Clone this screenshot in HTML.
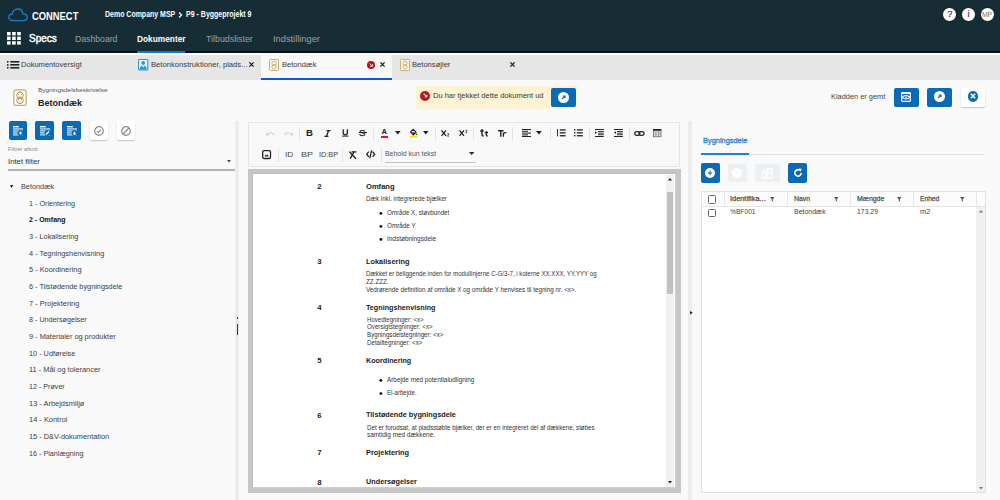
<!DOCTYPE html>
<html><head><meta charset="utf-8">
<style>
*{box-sizing:border-box;margin:0;padding:0}
html,body{width:1000px;height:500px;overflow:hidden;background:#f9f9f9;font-family:"Liberation Sans",sans-serif;color:#333}
.a{position:absolute}
.t{position:absolute;white-space:nowrap;line-height:1;transform-origin:0 0}
.bb{position:absolute;background:#0b6ab5;border-radius:2px}
.bw{position:absolute;background:#fff;border-radius:2px;box-shadow:0 1px 1.5px rgba(0,0,0,.22)}
svg{position:absolute;overflow:visible}

</style></head><body>
<!-- HEADER -->
<div class="a" style="left:0;top:0;width:1000px;height:51px;background:#162d35"></div>
<div class="a" style="left:0;top:51px;width:1000px;height:2px;background:#061018"></div>
<div class="a" style="left:0;top:53px;width:1000px;height:2px;background:#fff"></div>
<svg style="left:8px;top:8px" width="20" height="14" viewBox="0 0 20 14">
  <path d="M5 12.6 C2.3 12.6 0.8 10.9 0.8 9.2 C0.8 7.3 2.3 5.9 4.3 6 C4.6 3.3 6.7 1 9.7 1 C12.6 1 14.6 3.2 15 5.8 C17.4 5.7 19.2 7.3 19.2 9.3 C19.2 11.2 17.7 12.6 15.6 12.6 Z" fill="none" stroke="#1a80d2" stroke-width="1.3"/>
</svg>
<svg style="left:177.5px;top:12px" width="5" height="6" viewBox="0 0 5 6"><path d="M1 0.5 L3.6 3 L1 5.5" fill="none" stroke="#fff" stroke-width="1.2"/></svg>
<div class="a" style="left:942px;top:6.8px;width:15px;height:15px;border-radius:50%;background:#fff;border:1.3px solid #061015"></div>
<div class="a" style="left:961px;top:6.8px;width:15px;height:15px;border-radius:50%;background:#fff;border:1.3px solid #061015"></div>
<div class="a" style="left:980px;top:6.8px;width:15px;height:15px;border-radius:50%;background:#fff;border:1.3px solid #061015"></div>
<div class="t" style="left:947.2px;top:9.6px;font-size:9px;color:#333;-webkit-text-stroke:0.2px #333">?</div>
<div class="t" style="left:967.4px;top:9.6px;font-size:9px;color:#444;-webkit-text-stroke:0.25px #444">i</div>
<div class="t" style="left:982px;top:11px;font-size:7px;color:#777;letter-spacing:-0.4px">MP</div>
<svg style="left:7px;top:32px" width="14" height="13" viewBox="0 0 14 13"><g fill="#fff">
  <rect x="0" y="0" width="3.6" height="3.4"/><rect x="5.1" y="0" width="3.6" height="3.4"/><rect x="10.2" y="0" width="3.6" height="3.4"/>
  <rect x="0" y="4.6" width="3.6" height="3.4"/><rect x="5.1" y="4.6" width="3.6" height="3.4"/><rect x="10.2" y="4.6" width="3.6" height="3.4"/>
  <rect x="0" y="9.2" width="3.6" height="3.4"/><rect x="5.1" y="9.2" width="3.6" height="3.4"/><rect x="10.2" y="9.2" width="3.6" height="3.4"/></g></svg>
<div class="a" style="left:136.5px;top:51px;width:48px;height:2px;background:#0a7ad6"></div>

<!-- TAB BAR -->
<div class="a" style="left:0;top:55px;width:1000px;height:25px;background:#e6e6e6"></div>
<div class="a" style="left:261px;top:55px;width:130.5px;height:25px;background:#f8f8f8"></div>
<div class="a" style="left:261px;top:77.5px;width:130.5px;height:2px;background:#0a5ec0"></div>
<svg style="left:6.5px;top:61px" width="13" height="8" viewBox="0 0 13 8"><g fill="#222">
  <rect x="0" y="0" width="1.5" height="1.6"/><rect x="3.3" y="0" width="9" height="1.6"/>
  <rect x="0" y="3" width="1.5" height="1.6"/><rect x="3.3" y="3" width="9" height="1.6"/>
  <rect x="0" y="6" width="1.5" height="1.6"/><rect x="3.3" y="6" width="9" height="1.6"/></g></svg>
<svg style="left:137.8px;top:58.7px" width="10.4" height="11.4" viewBox="0 0 10.4 11.4">
  <rect x="0.55" y="0.55" width="9.3" height="10.3" rx="0.8" fill="#e9f4fb" stroke="#2b95d8" stroke-width="1.1"/>
  <circle cx="5.2" cy="3.9" r="1.9" fill="#2b95d8"/>
  <path d="M1.6 10.3 C1.9 7.6 3.4 6.6 5.2 6.6 C7 6.6 8.5 7.6 8.8 10.3 Z" fill="#2b95d8"/>
  <path d="M3.6 6.8 L5.2 8.6 L6.8 6.8" fill="#e9f4fb"/>
</svg>
<svg style="left:249px;top:62px" width="5" height="5" viewBox="0 0 5 5"><path d="M0.4 0.4 L4.6 4.6 M4.6 0.4 L0.4 4.6" stroke="#1a1a1a" stroke-width="1.25"/></svg>
<svg style="left:269px;top:58.5px" width="10" height="12" viewBox="0 0 10 12">
  <rect x="0.5" y="0.5" width="9" height="11" rx="0.8" fill="#fbf8f0" stroke="#c2a56b" stroke-width="0.9"/>
  <circle cx="5" cy="4.2" r="2.2" fill="none" stroke="#c2a56b" stroke-width="0.8"/>
  <circle cx="5" cy="7.8" r="2.2" fill="none" stroke="#c2a56b" stroke-width="0.8"/>
  <g fill="#c2a56b"><circle cx="4" cy="3.6" r="0.45"/><circle cx="6" cy="3.6" r="0.45"/><circle cx="4" cy="7.2" r="0.45"/><circle cx="6" cy="7.2" r="0.45"/></g>
</svg>
<div class="a" style="left:367px;top:60.9px;width:8.2px;height:8.2px;border-radius:50%;background:#c0121b"></div>
<svg style="left:369.2px;top:63px" width="4" height="4" viewBox="0 0 4 4"><path d="M0.5 0.5 L3.2 3.2 M3.3 1.2 L3.3 3.3 L1.2 3.3" fill="none" stroke="#fff" stroke-width="0.9"/></svg>
<svg style="left:379.5px;top:62px" width="5" height="5" viewBox="0 0 5 5"><path d="M0.4 0.4 L4.6 4.6 M4.6 0.4 L0.4 4.6" stroke="#1a1a1a" stroke-width="1.25"/></svg>
<svg style="left:399.5px;top:58.5px" width="10" height="12" viewBox="0 0 10 12">
  <rect x="0.5" y="0.5" width="9" height="11" rx="0.8" fill="#fbf8f0" stroke="#c2a56b" stroke-width="0.9"/>
  <circle cx="5" cy="4.2" r="2.2" fill="none" stroke="#c2a56b" stroke-width="0.8"/>
  <circle cx="5" cy="7.8" r="2.2" fill="none" stroke="#c2a56b" stroke-width="0.8"/>
  <g fill="#c2a56b"><circle cx="4" cy="3.6" r="0.45"/><circle cx="6" cy="3.6" r="0.45"/><circle cx="4" cy="7.2" r="0.45"/><circle cx="6" cy="7.2" r="0.45"/></g>
</svg>
<svg style="left:510.2px;top:62px" width="5" height="5" viewBox="0 0 5 5"><path d="M0.4 0.4 L4.6 4.6 M4.6 0.4 L0.4 4.6" stroke="#1a1a1a" stroke-width="1.25"/></svg>

<!-- DOC HEADER -->
<svg style="left:12.5px;top:88.5px" width="14" height="17" viewBox="0 0 14 17">
  <rect x="0.9" y="0.9" width="12.2" height="15.4" rx="1" fill="#fff" stroke="#b8974f" stroke-width="1"/>
  <path d="M7 1.5 V3" stroke="#b8974f" stroke-width="0.8"/>
  <circle cx="7" cy="6.3" r="3.3" fill="none" stroke="#b8974f" stroke-width="1"/>
  <circle cx="7" cy="11.4" r="3.3" fill="none" stroke="#b8974f" stroke-width="1"/>
  <g fill="#b8974f"><circle cx="5.4" cy="5.3" r="0.65"/><circle cx="8.6" cy="5.3" r="0.65"/><circle cx="5.4" cy="10.4" r="0.65"/><circle cx="8.6" cy="10.4" r="0.65"/></g>
  <path d="M7 6.6 V8.2 M7 11.7 V13.3" stroke="#b8974f" stroke-width="0.8"/>
</svg>
<div class="a" style="left:416px;top:86px;width:162px;height:22.5px;background:#fdf2d4"></div>
<div class="a" style="left:420.2px;top:91.3px;width:10px;height:10px;border-radius:50%;background:#bf1420"></div>
<svg style="left:422.8px;top:93.4px" width="5" height="5" viewBox="0 0 5 5"><path d="M0.6 0.6 L3.2 3.2" stroke="#fff" stroke-width="1.2"/><path d="M4.3 1.4 L4.3 4.3 L1.4 4.3Z" fill="#fff"/></svg>
<div class="bb" style="left:550.5px;top:88px;width:25px;height:18.6px"></div>
<div class="a" style="left:557.6px;top:91.8px;width:11px;height:11px;border-radius:50%;background:#fff"></div>
<svg style="left:560.6px;top:94.8px" width="5" height="5" viewBox="0 0 5 5"><path d="M0.8 4.2 L4 1 M1.8 1 L4 1 L4 3.2" fill="none" stroke="#0b6ab5" stroke-width="1.1"/></svg>

<div class="bb" style="left:893.6px;top:88px;width:25px;height:18.8px"></div>
<svg style="left:901.3px;top:91.9px" width="10" height="10" viewBox="0 0 10 10">
  <rect x="0.6" y="0.7" width="8.8" height="8.6" rx="1" fill="none" stroke="#fff" stroke-width="1.2"/>
  <rect x="0.6" y="0.4" width="8.8" height="1.6" fill="#fff"/>
  <path d="M1.2 5.2 C3 2.9 7 2.9 8.8 5.2 C7 7.5 3 7.5 1.2 5.2 Z" fill="none" stroke="#fff" stroke-width="1.1"/>
  <circle cx="5" cy="5.2" r="0.9" fill="#cfe6f7"/>
</svg>
<div class="bb" style="left:927px;top:88px;width:25px;height:18.8px"></div>
<div class="a" style="left:934px;top:91px;width:11px;height:11px;border-radius:50%;background:#fff"></div>
<svg style="left:937px;top:94px" width="5" height="5" viewBox="0 0 5 5"><path d="M0.8 4.2 L4 1 M1.8 1 L4 1 L4 3.2" fill="none" stroke="#0b6ab5" stroke-width="1.1"/></svg>
<div class="bw" style="left:960.5px;top:88px;width:24.5px;height:18.8px"></div>
<div class="a" style="left:967.5px;top:91px;width:10.6px;height:10.6px;border-radius:50%;background:#0b6ab5"></div>
<svg style="left:969.9px;top:93.4px" width="6" height="6" viewBox="0 0 6 6"><path d="M0.8 0.8 L5.2 5.2 M5.2 0.8 L0.8 5.2" stroke="#fff" stroke-width="1.5"/></svg>

<!-- LEFT BUTTONS -->
<div class="bb" style="left:8.5px;top:121.2px;width:18.5px;height:18.8px"></div>
<div class="bb" style="left:35.3px;top:121.2px;width:18.5px;height:18.8px"></div>
<div class="bb" style="left:62px;top:121.2px;width:18.5px;height:18.8px"></div>
<svg style="left:13px;top:125.5px" width="11" height="10" viewBox="0 0 11 10">
  <rect x="0" y="0" width="5.8" height="1.4" fill="#fff"/>
  <g fill="#9fcdee"><rect x="0" y="2.1" width="10" height="1.6"/><rect x="0" y="4.1" width="10" height="1.6"/><rect x="0" y="6.1" width="10" height="1.6"/><rect x="0" y="8.1" width="10" height="1.5"/></g>
  <circle cx="7.5" cy="7" r="2.9" fill="#0b6ab5"/>
  <path d="M7.5 5.4 V8.6 M5.9 7 H9.1" stroke="#fff" stroke-width="1.2"/>
</svg>
<svg style="left:39.8px;top:125.5px" width="11" height="10" viewBox="0 0 11 10">
  <rect x="0" y="0" width="5.8" height="1.4" fill="#fff"/>
  <g fill="#9fcdee"><rect x="0" y="2.1" width="10" height="1.6"/><rect x="0" y="4.1" width="10" height="1.6"/><rect x="0" y="6.1" width="10" height="1.6"/><rect x="0" y="8.1" width="10" height="1.5"/></g>
  <circle cx="7.5" cy="7" r="2.9" fill="#0b6ab5"/>
  <path d="M6 8.5 L9 5.5" stroke="#fff" stroke-width="1.2"/>
</svg>
<svg style="left:66.5px;top:125.5px" width="11" height="10" viewBox="0 0 11 10">
  <rect x="0" y="0" width="5.8" height="1.4" fill="#fff"/>
  <g fill="#9fcdee"><rect x="0" y="2.1" width="10" height="1.6"/><rect x="0" y="4.1" width="10" height="1.6"/><rect x="0" y="6.1" width="10" height="1.6"/><rect x="0" y="8.1" width="10" height="1.5"/></g>
  <circle cx="7.5" cy="7" r="2.9" fill="#0b6ab5"/>
  <path d="M7.5 5.2 C8.3 6.4 8.7 7 8.7 7.7 A1.2 1.2 0 0 1 6.3 7.7 C6.3 7 6.7 6.4 7.5 5.2Z" fill="#fff"/>
</svg>
<div class="bw" style="left:89.8px;top:121.2px;width:18.6px;height:18.8px"></div>
<div class="bw" style="left:116.9px;top:121.2px;width:18.6px;height:18.8px"></div>
<svg style="left:94px;top:125.5px" width="10" height="10" viewBox="0 0 10 10"><circle cx="5" cy="5" r="4.3" fill="none" stroke="#8a8a8a" stroke-width="1.2"/><path d="M2.9 5.1 L4.4 6.5 L7.2 3.7" fill="none" stroke="#8a8a8a" stroke-width="1.2"/></svg>
<svg style="left:121.2px;top:125.5px" width="10" height="10" viewBox="0 0 10 10"><circle cx="5" cy="5" r="4.3" fill="none" stroke="#8a8a8a" stroke-width="1.2"/><path d="M2 8 L8 2" stroke="#8a8a8a" stroke-width="1.2"/></svg>

<!-- filter -->
<svg style="left:226.9px;top:160px" width="4" height="2.5" viewBox="0 0 4 2.5"><path d="M0 0 H4 L2 2.5Z" fill="#444"/></svg>
<div class="a" style="left:8px;top:169px;width:227px;height:1.8px;background:#b4b4b4"></div>
<svg style="left:10.4px;top:185.3px" width="3.2" height="3" viewBox="0 0 3.2 3"><path d="M0 0 H3.2 L1.6 3Z" fill="#222"/></svg>

<!-- LEFT SPLITTER -->
<div class="a" style="left:235px;top:121px;width:4px;height:379px;background:#ececec"></div>
<div class="a" style="left:236.5px;top:317px;width:1.5px;height:1.5px;background:#333"></div>
<div class="a" style="left:236.5px;top:324px;width:1.2px;height:10.5px;background:#333"></div>

<!-- EDITOR -->
<div class="a" style="left:247.5px;top:121.5px;width:432px;height:45px;background:#f8f8f8;border:1px solid #e6e6e6"></div>
<div class="a" style="left:247.5px;top:168.8px;width:433px;height:324px;background:#c6c6c6"></div>
<div class="a" style="left:252.3px;top:173.3px;width:423.5px;height:314.7px;background:#fff;border:1px solid #bdbdbd;border-right-color:#cfcfcf;border-bottom-color:#cfcfcf"></div>
<div class="a" style="left:666.4px;top:175px;width:7.5px;height:312px;background:#f0f0f0"></div>
<div class="a" style="left:666.9px;top:192px;width:6.4px;height:101.6px;background:#c1c1c1"></div>
<svg style="left:668.3px;top:177.8px" width="4" height="2.6" viewBox="0 0 4 2.6"><path d="M0 2.6 H4 L2 0Z" fill="#222"/></svg>
<svg style="left:668.3px;top:481.2px" width="4" height="2.6" viewBox="0 0 4 2.6"><path d="M0 0 H4 L2 2.6Z" fill="#222"/></svg>
<svg style="left:0;top:0" width="1" height="1"><circle cx="380.90" cy="213.40" r="1.45" fill="#111"/></svg>
<svg style="left:0;top:0" width="1" height="1"><circle cx="380.90" cy="226.40" r="1.45" fill="#111"/></svg>
<svg style="left:0;top:0" width="1" height="1"><circle cx="380.90" cy="239.40" r="1.45" fill="#111"/></svg>
<svg style="left:0;top:0" width="1" height="1"><circle cx="380.90" cy="380.40" r="1.45" fill="#111"/></svg>
<svg style="left:0;top:0" width="1" height="1"><circle cx="380.90" cy="393.60" r="1.45" fill="#111"/></svg>

<!-- TOOLBAR ICONS -->
<div class="a" style="left:298.5px;top:127px;width:1px;height:13px;background:#e2e2e2"></div>
<div class="a" style="left:373px;top:127px;width:1px;height:13px;background:#e2e2e2"></div>
<div class="a" style="left:434.5px;top:127px;width:1px;height:13px;background:#e2e2e2"></div>
<div class="a" style="left:473px;top:127px;width:1px;height:13px;background:#e2e2e2"></div>
<div class="a" style="left:512.3px;top:127px;width:1px;height:13px;background:#e2e2e2"></div>
<div class="a" style="left:550.2px;top:127px;width:1px;height:13px;background:#e2e2e2"></div>
<div class="a" style="left:589.4px;top:127px;width:1px;height:13px;background:#e2e2e2"></div>
<div class="a" style="left:628.6px;top:127px;width:1px;height:13px;background:#e2e2e2"></div>
<div class="a" style="left:277.5px;top:149px;width:1px;height:13px;background:#e2e2e2"></div>
<div class="a" style="left:341.8px;top:149px;width:1px;height:13px;background:#e2e2e2"></div>
<div class="a" style="left:380.8px;top:149px;width:1px;height:13px;background:#e2e2e2"></div>
<!-- undo / redo -->
<svg style="left:266px;top:130.5px" width="9" height="5" viewBox="0 0 9 5"><path d="M1.5 3.8 C2.8 1.3 6.2 0.8 8.3 3.8" fill="none" stroke="#cfcfcf" stroke-width="1.2"/><path d="M0.2 1.3 L3 4.6 L0.2 4.6Z" fill="#cfcfcf"/></svg>
<svg style="left:283.5px;top:130.5px" width="9" height="5" viewBox="0 0 9 5"><path d="M7.5 3.8 C6.2 1.3 2.8 0.8 0.7 3.8" fill="none" stroke="#cfcfcf" stroke-width="1.2"/><path d="M8.8 1.3 L6 4.6 L8.8 4.6Z" fill="#cfcfcf"/></svg>
<!-- B I U S -->
<div class="t" style="left:306px;top:128.2px;font-size:9.6px;font-weight:bold;color:#222">B</div>
<svg style="left:323.5px;top:129.5px" width="7" height="7" viewBox="0 0 7 7"><path d="M2.6 0.6 H6.6 M0.4 6.4 H4.4 M4.6 0.6 L2.4 6.4" fill="none" stroke="#222" stroke-width="1.3"/></svg>
<svg style="left:341.5px;top:129.3px" width="7" height="8" viewBox="0 0 7 8"><path d="M1.2 0.2 V3.8 C1.2 5.3 2 5.9 3.3 5.9 C4.6 5.9 5.4 5.3 5.4 3.8 V0.2" fill="none" stroke="#222" stroke-width="1.3"/><rect x="0" y="6.6" width="6.6" height="1" fill="#222"/></svg>
<div class="t" style="left:359px;top:127.8px;font-size:9.8px;color:#222;-webkit-text-stroke:0.25px #222">S</div><div class="a" style="left:358.8px;top:132.2px;width:8px;height:0.9px;background:#222"></div>
<!-- A color -->
<div class="t" style="left:381.4px;top:128.4px;font-size:7.6px;font-weight:bold;color:#222">A</div><div class="a" style="left:381px;top:136px;width:7px;height:1.8px;background:#e8141b"></div>
<svg style="left:394.6px;top:131.2px" width="6" height="4" viewBox="0 0 6 4"><path d="M0 0 H5.6 L2.8 3.6Z" fill="#222"/></svg>
<svg style="left:410px;top:129.2px" width="8" height="9" viewBox="0 0 8 9"><path d="M3.2 0.4 L6 3.2 L3.4 5.8 L0.6 3 Z" fill="none" stroke="#222" stroke-width="1.2"/><path d="M1.2 3.4 H5.6 L3.4 5.6 Z" fill="#222"/><circle cx="6.6" cy="5.2" r="0.8" fill="#222"/><rect x="0" y="6.8" width="7.4" height="1.8" fill="#f3e600"/></svg>
<svg style="left:423.4px;top:131.2px" width="6" height="4" viewBox="0 0 6 4"><path d="M0 0 H5.6 L2.8 3.6Z" fill="#222"/></svg>
<!-- sub / sup -->
<svg style="left:441.4px;top:129.6px" width="9" height="7" viewBox="0 0 9 7"><path d="M0.5 0.4 L5 5.8 M5 0.4 L0.5 5.8" stroke="#222" stroke-width="1.3"/><path d="M6.4 3.8 H8 L6.4 6.2 H8" fill="none" stroke="#222" stroke-width="0.7"/></svg>
<svg style="left:459px;top:129.6px" width="9" height="7" viewBox="0 0 9 7"><path d="M0.5 0.4 L5 5.8 M5 0.4 L0.5 5.8" stroke="#222" stroke-width="1.3"/><path d="M6.6 0.3 H8.2 L6.6 2.8 H8.2" fill="none" stroke="#222" stroke-width="0.7"/></svg>
<!-- tt Tr -->
<svg style="left:480px;top:129.2px" width="9" height="8" viewBox="0 0 9 8"><path d="M2 0 V6 C2 6.8 2.6 7 3.6 6.8 M0.2 2 H3.6" fill="none" stroke="#222" stroke-width="1.4"/><path d="M6.4 2.2 V6.2 C6.4 6.9 6.9 7 7.8 6.9 M4.8 3.5 H8" fill="none" stroke="#222" stroke-width="1.3"/></svg>
<svg style="left:498px;top:129.6px" width="9" height="7" viewBox="0 0 9 7"><path d="M0 0.7 H5.6 M2.8 0.7 V6.8" fill="none" stroke="#222" stroke-width="1.4"/><path d="M5.4 6.8 V2.8 M5.4 3.6 C5.9 2.7 7 2.5 8.4 2.6" fill="none" stroke="#222" stroke-width="1.3"/></svg>
<!-- align -->
<svg style="left:521.8px;top:129px" width="9" height="8" viewBox="0 0 9 8"><g fill="#222"><rect x="0" y="0" width="9" height="1"/><rect x="0" y="1.8" width="6" height="1"/><rect x="0" y="3.6" width="9" height="1"/><rect x="0" y="5.4" width="6" height="1"/><rect x="0" y="7" width="9" height="1"/></g></svg>
<svg style="left:536px;top:131px" width="6" height="4" viewBox="0 0 6 4"><path d="M0 0 H5.8 L2.9 3.4Z" fill="#222"/></svg>
<!-- OL UL -->
<svg style="left:556.6px;top:129.2px" width="9" height="8" viewBox="0 0 9 8"><g fill="#222"><rect x="2.8" y="0.3" width="5.8" height="1.3"/><rect x="2.8" y="3.2" width="5.8" height="1.3"/><rect x="2.8" y="6.1" width="5.8" height="1.3"/><rect x="0" y="0" width="0.9" height="7.4"/></g></svg>
<svg style="left:574.2px;top:129.2px" width="9" height="8" viewBox="0 0 9 8"><g fill="#222"><rect x="2.8" y="0.3" width="6" height="1.3"/><rect x="2.8" y="3.2" width="6" height="1.3"/><rect x="2.8" y="6.1" width="6" height="1.3"/><rect x="0" y="0.2" width="1.4" height="1.4"/><rect x="0" y="3.1" width="1.4" height="1.4"/><rect x="0" y="6" width="1.4" height="1.4"/></g></svg>
<!-- indent outdent -->
<svg style="left:595.4px;top:129px" width="9" height="8" viewBox="0 0 9 8"><g fill="#222"><rect x="0" y="0" width="8.8" height="1"/><rect x="3" y="2" width="5.8" height="0.9"/><rect x="3" y="3.7" width="5.8" height="0.9"/><rect x="3" y="5.3" width="5.8" height="0.9"/><rect x="0" y="7" width="8.8" height="1"/><path d="M0 2.2 L2 3.6 L0 5Z"/></g></svg>
<svg style="left:613.6px;top:129px" width="9" height="8" viewBox="0 0 9 8"><g fill="#222"><rect x="0" y="0" width="8.8" height="1"/><rect x="3" y="2" width="5.8" height="0.9"/><rect x="3" y="3.7" width="5.8" height="0.9"/><rect x="3" y="5.3" width="5.8" height="0.9"/><rect x="0" y="7" width="8.8" height="1"/><path d="M2 2.2 L0 3.6 L2 5Z"/></g></svg>
<!-- link -->
<svg style="left:634px;top:130.6px" width="11" height="5" viewBox="0 0 11 5"><rect x="0.7" y="0.7" width="5.2" height="3.6" rx="1.8" fill="none" stroke="#222" stroke-width="1.3"/><rect x="4.9" y="0.7" width="5.2" height="3.6" rx="1.8" fill="none" stroke="#222" stroke-width="1.3"/></svg>
<!-- table -->
<svg style="left:652.8px;top:128.8px" width="8.5" height="8.2" viewBox="0 0 8.5 8.2"><rect x="0" y="0" width="8.4" height="1.8" fill="#222"/><rect x="0.4" y="1.8" width="7.6" height="6" fill="none" stroke="#555" stroke-width="0.7"/><path d="M2.9 1.8 V7.8 M5.5 1.8 V7.8 M0.4 3.8 H8 M0.4 5.8 H8" stroke="#777" stroke-width="0.6"/></svg>
<!-- row 2 -->
<svg style="left:262px;top:150px" width="9.2" height="9.2" viewBox="0 0 9.2 9.2"><rect x="0.7" y="0.7" width="7.8" height="7.8" rx="1.3" fill="#fff" stroke="#222" stroke-width="1.3"/><path d="M2.6 6.4 L3.8 4.6 L4.8 5.6 L5.6 4.2 L6.7 6.4Z" fill="#222"/></svg>
<svg style="left:349px;top:150.5px" width="8" height="8.5" viewBox="0 0 8 8.5"><path d="M2.6 0.9 H7.4 M0.3 0.6 L7 7.8 M5 1 L1.2 7.8" fill="none" stroke="#1a1a1a" stroke-width="1.3"/></svg>
<svg style="left:366px;top:150.3px" width="9.4" height="8.8" viewBox="0 0 9.4 8.8"><path d="M2.8 1.6 L0.7 4.2 L2.8 6.8 M6.6 1.6 L8.7 4.2 L6.6 6.8 M5.6 0.4 L3.8 8.4" fill="none" stroke="#1a1a1a" stroke-width="1.25"/></svg>
<svg style="left:468.6px;top:152.3px" width="5.4" height="3" viewBox="0 0 5.4 3"><path d="M0 0 H5.4 L2.7 3Z" fill="#2a2a2a"/></svg>
<div class="a" style="left:384.7px;top:161.5px;width:91.5px;height:1.5px;background:#c4c4c4"></div>


<!-- RIGHT SPLITTER -->
<div class="a" style="left:688.3px;top:121px;width:4px;height:379px;background:#ececec"></div>
<svg style="left:689.5px;top:310.8px" width="3" height="3.6" viewBox="0 0 3 3.6"><path d="M0 0 L2.8 1.8 L0 3.6Z" fill="#222"/></svg>

<!-- RIGHT PANEL -->
<div class="a" style="left:701px;top:153.5px;width:284px;height:1px;background:#e2e2e2"></div>
<div class="a" style="left:701px;top:153px;width:48.4px;height:1.7px;background:#1a85c8"></div>
<div class="bb" style="left:701px;top:163.4px;width:18.8px;height:19.2px"></div>
<div class="a" style="left:705.4px;top:168px;width:10px;height:10px;border-radius:50%;background:#fff"></div>
<svg style="left:707.4px;top:170px" width="6" height="6" viewBox="0 0 6 6"><path d="M3 0.8 V5.2 M0.8 3 H5.2" stroke="#0b6ab5" stroke-width="1.1"/></svg>
<div class="a" style="left:728px;top:163.6px;width:18.6px;height:18.6px;background:#ebf0f4;border-radius:2px"></div>
<div class="a" style="left:732.3px;top:168px;width:10px;height:10px;border-radius:50%;background:#fff"></div>
<div class="a" style="left:734.6px;top:172.4px;width:5.4px;height:1px;background:#eef2f5"></div>
<div class="a" style="left:755.4px;top:163.6px;width:24.6px;height:18.6px;background:#ebf0f4;border-radius:2px"></div>
<svg style="left:762px;top:167.5px" width="11" height="11" viewBox="0 0 11 11"><rect x="0.8" y="3.2" width="3.2" height="7" fill="none" stroke="#fff" stroke-width="1.2"/><rect x="5.8" y="0.8" width="4" height="9.4" fill="none" stroke="#fff" stroke-width="1.2"/><path d="M5.8 5 H9.8" stroke="#fff" stroke-width="1.1"/></svg>
<div class="bb" style="left:788.4px;top:163.4px;width:19px;height:19.2px"></div>
<svg style="left:792.9px;top:168px" width="10" height="10" viewBox="0 0 10 10"><path d="M8.2 5 A3.2 3.2 0 1 1 6.8 2.3" fill="none" stroke="#fff" stroke-width="1.6"/><path d="M5.4 0.4 L8.6 0.8 L7.8 4 Z" fill="#fff"/></svg>

<div class="a" style="left:700.5px;top:190.5px;width:285.5px;height:302px;background:#fff;border:1px solid #e2e2e2"></div>
<div class="a" style="left:701.5px;top:191.5px;width:283.5px;height:14.5px;background:#fcfcfc"></div>
<div class="a" style="left:701.5px;top:205.5px;width:283.5px;height:1px;background:#e4e4e4"></div>
<div class="a" style="left:723.5px;top:191.5px;width:1px;height:14px;background:#e6e6e6"></div>
<div class="a" style="left:786.6px;top:191.5px;width:1px;height:14px;background:#e6e6e6"></div>
<div class="a" style="left:849.7px;top:191.5px;width:1px;height:14px;background:#e6e6e6"></div>
<div class="a" style="left:912.7px;top:191.5px;width:1px;height:14px;background:#e6e6e6"></div>
<div class="a" style="left:975.8px;top:191.5px;width:1px;height:14px;background:#e6e6e6"></div>
<div class="a" style="left:976px;top:206.5px;width:9px;height:285px;background:#f0f0f0"></div>
<svg style="left:978.5px;top:210px" width="4" height="2.5" viewBox="0 0 4 2.5"><path d="M0 2.5 H4 L2 0Z" fill="#777"/></svg>
<svg style="left:978.5px;top:486.5px" width="4" height="2.5" viewBox="0 0 4 2.5"><path d="M0 0 H4 L2 2.5Z" fill="#777"/></svg>
<div class="a" style="left:707.5px;top:195px;width:8.5px;height:8.5px;border:1.2px solid #666;border-radius:1.5px;background:#fff"></div>
<div class="a" style="left:707.5px;top:208.5px;width:8.5px;height:8.5px;border:1.2px solid #666;border-radius:1.5px;background:#fff"></div>
<svg style="left:770px;top:196.5px" width="4.5" height="4.5" viewBox="0 0 4.5 4.5"><path d="M0 0 H4.6 L2.9 2.2 V4.6 L1.7 4 V2.2 Z" fill="#5a5a5a"/></svg>
<svg style="left:834px;top:196.5px" width="4.5" height="4.5" viewBox="0 0 4.5 4.5"><path d="M0 0 H4.6 L2.9 2.2 V4.6 L1.7 4 V2.2 Z" fill="#5a5a5a"/></svg>
<svg style="left:896.6px;top:196.5px" width="4.5" height="4.5" viewBox="0 0 4.5 4.5"><path d="M0 0 H4.6 L2.9 2.2 V4.6 L1.7 4 V2.2 Z" fill="#5a5a5a"/></svg>
<svg style="left:960px;top:196.5px" width="4.5" height="4.5" viewBox="0 0 4.5 4.5"><path d="M0 0 H4.6 L2.9 2.2 V4.6 L1.7 4 V2.2 Z" fill="#5a5a5a"/></svg>

<div class="t" style="left:32.00px;top:11.50px;font-size:10.4px;color:#fff;font-weight:bold;transform:scaleX(0.9024);">CONNECT</div>
<div class="t" style="left:104.80px;top:10.02px;font-size:8.6px;color:#fff;font-weight:bold;transform:scaleX(0.8126);">Demo Company MSP</div>
<div class="t" style="left:186.40px;top:10.02px;font-size:8.6px;color:#fff;font-weight:bold;transform:scaleX(0.8161);">P9 - Byggeprojekt 9</div>
<div class="t" style="left:28.80px;top:33.50px;font-size:10.4px;color:#fff;transform:scaleX(0.9589);-webkit-text-stroke:0.45px #fff;">Specs</div>
<div class="t" style="left:75.00px;top:34.55px;font-size:8.8px;color:#9aa3a8;transform:scaleX(0.9856);">Dashboard</div>
<div class="t" style="left:136.50px;top:34.55px;font-size:8.8px;color:#fff;font-weight:bold;transform:scaleX(0.9470);">Dokumenter</div>
<div class="t" style="left:205.60px;top:34.55px;font-size:8.8px;color:#9aa3a8;transform:scaleX(1.0043);">Tilbudslister</div>
<div class="t" style="left:273.00px;top:34.55px;font-size:8.8px;color:#9aa3a8;transform:scaleX(1.0535);">Indstillinger</div>
<div class="t" style="left:21.00px;top:60.65px;font-size:7.5px;color:#3c3c3c;transform:scaleX(1.0053);">Dokumentoversigt</div>
<div class="t" style="left:151.00px;top:60.95px;font-size:7.5px;color:#3c3c3c;transform:scaleX(1.0205);">Betonkonstruktioner, plads...</div>
<div class="t" style="left:282.00px;top:60.95px;font-size:7.5px;color:#3c3c3c;transform:scaleX(1.0067);">Betondæk</div>
<div class="t" style="left:412.40px;top:60.95px;font-size:7.5px;color:#3c3c3c;transform:scaleX(1.0122);">Betonsøjler</div>
<div class="t" style="left:37.50px;top:87.66px;font-size:5.6px;color:#555;transform:scaleX(1.1338);">Bygningsdelsbeskrivelse</div>
<div class="t" style="left:37.50px;top:98.36px;font-size:9.5px;color:#222;font-weight:bold;transform:scaleX(0.9504);">Betondæk</div>
<div class="t" style="left:432.80px;top:92.38px;font-size:7.7px;color:#3a3a3a;transform:scaleX(0.9760);">Du har tjekket dette dokument ud</div>
<div class="t" style="left:831.20px;top:92.80px;font-size:7.8px;color:#444;transform:scaleX(0.9481);">Kladden er gemt</div>
<div class="t" style="left:8.10px;top:146.69px;font-size:5.8px;color:#888;transform:scaleX(0.9798);">Filtrér afsnit</div>
<div class="t" style="left:8.10px;top:157.60px;font-size:7.8px;color:#333;transform:scaleX(0.9924);">Intet filter</div>
<div class="t" style="left:20.70px;top:183.00px;font-size:7.8px;color:#3d3d3d;transform:scaleX(0.9359);">Betondæk</div>
<div class="t" style="left:29.35px;top:199.70px;font-size:7.8px;color:#3d3d3d;transform:scaleX(0.9242);">1 - Orientering</div>
<div class="t" style="left:29.35px;top:216.37px;font-size:7.8px;color:#111;font-weight:bold;transform:scaleX(0.8992);">2 - Omfang</div>
<div class="t" style="left:29.35px;top:233.04px;font-size:7.8px;color:#3d3d3d;transform:scaleX(0.9347);">3 - Lokalisering</div>
<div class="t" style="left:29.35px;top:249.71px;font-size:7.8px;color:#3d3d3d;transform:scaleX(0.9462);">4 - Tegningshenvisning</div>
<div class="t" style="left:29.35px;top:266.38px;font-size:7.8px;color:#3d3d3d;transform:scaleX(0.9468);">5 - Koordinering</div>
<div class="t" style="left:29.35px;top:283.05px;font-size:7.8px;color:#3d3d3d;transform:scaleX(0.9372);">6 - Tilstødende bygningsdele</div>
<div class="t" style="left:29.35px;top:299.72px;font-size:7.8px;color:#3d3d3d;transform:scaleX(0.9515);">7 - Projektering</div>
<div class="t" style="left:29.35px;top:316.39px;font-size:7.8px;color:#3d3d3d;transform:scaleX(0.9229);">8 - Undersøgelser</div>
<div class="t" style="left:29.35px;top:333.06px;font-size:7.8px;color:#3d3d3d;transform:scaleX(0.9438);">9 - Materialer og produkter</div>
<div class="t" style="left:29.35px;top:349.73px;font-size:7.8px;color:#3d3d3d;transform:scaleX(0.9370);">10 - Udførelse</div>
<div class="t" style="left:29.35px;top:366.40px;font-size:7.8px;color:#3d3d3d;transform:scaleX(0.9502);">11 - Mål og tolerancer</div>
<div class="t" style="left:29.35px;top:383.07px;font-size:7.8px;color:#3d3d3d;transform:scaleX(0.9164);">12 - Prøver</div>
<div class="t" style="left:29.35px;top:399.74px;font-size:7.8px;color:#3d3d3d;transform:scaleX(0.9538);">13 - Arbejdsmiljø</div>
<div class="t" style="left:29.35px;top:416.41px;font-size:7.8px;color:#3d3d3d;transform:scaleX(0.9536);">14 - Kontrol</div>
<div class="t" style="left:29.35px;top:433.08px;font-size:7.8px;color:#3d3d3d;transform:scaleX(0.9432);">15 - D&amp;V-dokumentation</div>
<div class="t" style="left:29.35px;top:449.75px;font-size:7.8px;color:#3d3d3d;transform:scaleX(0.9230);">16 - Planlægning</div>
<div class="t" style="left:284.60px;top:151.17px;font-size:7.6px;color:#444;transform:scaleX(1.0791);">ID</div>
<div class="t" style="left:300.70px;top:151.17px;font-size:7.6px;color:#444;transform:scaleX(1.1802);">BP</div>
<div class="t" style="left:318.50px;top:151.17px;font-size:7.6px;color:#444;transform:scaleX(0.9653);">ID:BP</div>
<div class="t" style="left:384.70px;top:149.64px;font-size:7.4px;color:#555;transform:scaleX(0.9355);">Behold kun tekst</div>
<div class="t" style="left:317.30px;top:182.80px;font-size:7.8px;color:#222;font-weight:bold;">2</div>
<div class="t" style="left:366.40px;top:182.54px;font-size:8.1px;color:#222;font-weight:bold;transform:scaleX(0.9356);">Omfang</div>
<div class="t" style="left:366.40px;top:195.94px;font-size:6.8px;color:#333;transform:scaleX(0.9114);">Dæk inkl. integrerede bjælker</div>
<div class="t" style="left:387.20px;top:210.14px;font-size:6.8px;color:#333;transform:scaleX(0.9101);">Område X, støvbundet</div>
<div class="t" style="left:387.20px;top:223.14px;font-size:6.8px;color:#333;transform:scaleX(0.9281);">Område Y</div>
<div class="t" style="left:387.20px;top:236.14px;font-size:6.8px;color:#333;transform:scaleX(0.9469);">Indstøbningsdele</div>
<div class="t" style="left:317.30px;top:258.40px;font-size:7.8px;color:#222;font-weight:bold;">3</div>
<div class="t" style="left:366.40px;top:258.14px;font-size:8.1px;color:#222;font-weight:bold;transform:scaleX(0.9110);">Lokalisering</div>
<div class="t" style="left:366.40px;top:271.14px;font-size:6.8px;color:#333;transform:scaleX(0.9000);">Dækket er beliggende inden for modullinjerne C-G/3-7, i koterne XX.XXX, YY.YYY og</div>
<div class="t" style="left:366.40px;top:279.14px;font-size:6.8px;color:#333;transform:scaleX(0.9256);">ZZ.ZZZ.</div>
<div class="t" style="left:366.40px;top:286.94px;font-size:6.8px;color:#333;transform:scaleX(0.9212);">Vedrørende definition af område X og område Y henvises til tegning nr. &lt;x&gt;.</div>
<div class="t" style="left:317.30px;top:304.00px;font-size:7.8px;color:#222;font-weight:bold;">4</div>
<div class="t" style="left:366.40px;top:303.74px;font-size:8.1px;color:#222;font-weight:bold;transform:scaleX(0.8889);">Tegningshenvisning</div>
<div class="t" style="left:366.70px;top:316.74px;font-size:6.8px;color:#333;transform:scaleX(0.8969);">Hovedtegninger: &lt;x&gt;</div>
<div class="t" style="left:366.70px;top:324.34px;font-size:6.8px;color:#333;transform:scaleX(0.9092);">Oversigtstegninger: &lt;x&gt;</div>
<div class="t" style="left:366.70px;top:332.04px;font-size:6.8px;color:#333;transform:scaleX(0.9103);">Bygningsdelstegninger: &lt;x&gt;</div>
<div class="t" style="left:366.70px;top:339.54px;font-size:6.8px;color:#333;transform:scaleX(0.9098);">Detailtegninger: &lt;x&gt;</div>
<div class="t" style="left:317.30px;top:356.80px;font-size:7.8px;color:#222;font-weight:bold;">5</div>
<div class="t" style="left:366.40px;top:356.54px;font-size:8.1px;color:#222;font-weight:bold;transform:scaleX(0.8904);">Koordinering</div>
<div class="t" style="left:387.40px;top:376.74px;font-size:6.8px;color:#333;transform:scaleX(0.9345);">Arbejde med potentialudligning</div>
<div class="t" style="left:387.40px;top:389.84px;font-size:6.8px;color:#333;transform:scaleX(0.9006);">El-arbejde.</div>
<div class="t" style="left:317.30px;top:411.60px;font-size:7.8px;color:#222;font-weight:bold;">6</div>
<div class="t" style="left:366.40px;top:411.34px;font-size:8.1px;color:#222;font-weight:bold;transform:scaleX(0.9020);">Tilstødende bygningsdele</div>
<div class="t" style="left:366.50px;top:424.64px;font-size:6.8px;color:#333;transform:scaleX(0.9130);">Det er forudsat, at pladsstøbte bjælker, der er en integreret del af dækkene, støbes</div>
<div class="t" style="left:366.50px;top:432.14px;font-size:6.8px;color:#333;transform:scaleX(0.9422);">samtidig med dækkene.</div>
<div class="t" style="left:317.30px;top:449.10px;font-size:7.8px;color:#222;font-weight:bold;">7</div>
<div class="t" style="left:366.40px;top:448.84px;font-size:8.1px;color:#222;font-weight:bold;transform:scaleX(0.9118);">Projektering</div>
<div class="t" style="left:317.30px;top:478.60px;font-size:7.8px;color:#222;font-weight:bold;">8</div>
<div class="t" style="left:366.40px;top:478.34px;font-size:8.1px;color:#222;font-weight:bold;transform:scaleX(0.8989);">Undersøgelser</div>
<div class="t" style="left:703.00px;top:137.17px;font-size:7.6px;color:#1a85c8;transform:scaleX(0.9753);-webkit-text-stroke:0.3px #1a85c8;">Bygningsdele</div>
<div class="t" style="left:730.00px;top:195.74px;font-size:6.8px;color:#555;transform:scaleX(1.0866);-webkit-text-stroke:0.25px #555;">Identifika...</div>
<div class="t" style="left:793.60px;top:195.74px;font-size:6.8px;color:#555;transform:scaleX(1.0080);-webkit-text-stroke:0.25px #555;">Navn</div>
<div class="t" style="left:856.80px;top:195.74px;font-size:6.8px;color:#555;transform:scaleX(1.0153);-webkit-text-stroke:0.25px #555;">Mængde</div>
<div class="t" style="left:920.00px;top:195.74px;font-size:6.8px;color:#555;transform:scaleX(0.9783);-webkit-text-stroke:0.25px #555;">Enhed</div>
<div class="t" style="left:730.00px;top:208.94px;font-size:6.8px;color:#444;transform:scaleX(0.9795);">%BF001</div>
<div class="t" style="left:793.60px;top:208.94px;font-size:6.8px;color:#444;transform:scaleX(1.0232);">Betondæk</div>
<div class="t" style="left:856.80px;top:208.94px;font-size:6.8px;color:#444;transform:scaleX(1.0107);">173.29</div>
<div class="t" style="left:920.00px;top:208.94px;font-size:6.8px;color:#444;transform:scaleX(1.1077);">m2</div>
</body></html>
